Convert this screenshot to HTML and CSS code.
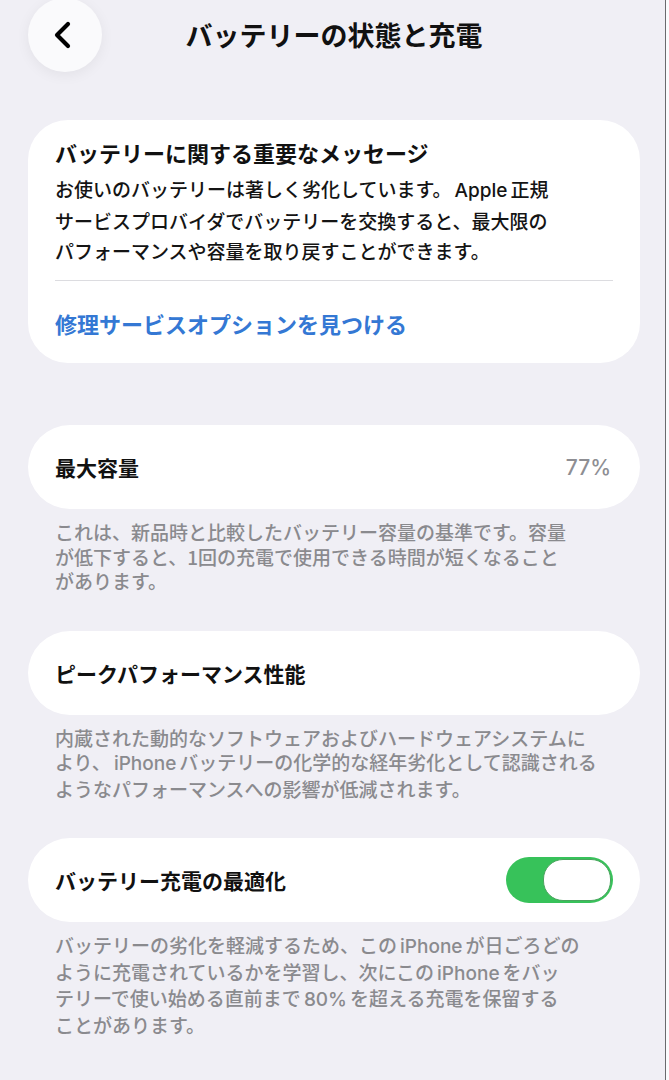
FILE: index.html
```html
<!DOCTYPE html>
<html lang="ja">
<head>
<meta charset="utf-8">
<title>バッテリーの状態と充電</title>
<link rel="stylesheet" href="styles.css">
</head>
<body>
<div class="page">
  <main class="screen">
    <header class="nav">
      <div class="back">
        <svg width="22" height="28" viewBox="0 0 22 28" aria-hidden="true">
          <path d="M16 3 L5 14 L16 25" fill="none" stroke="#000" stroke-width="4.2" stroke-linecap="round" stroke-linejoin="round"/>
        </svg>
      </div>
      <h1 class="title">バッテリーの状態と充電</h1>
      <div></div>
    </header>

    <section class="card message">
      <h2 class="msg-title">バッテリーに関する重要なメッセージ</h2>
      <p class="msg-body">お使いのバッテリーは著しく劣化しています。<span class="lat">Apple</span>正規<br>サービスプロバイダでバッテリーを交換すると、最大限の<br>パフォーマンスや容量を取り戻すことができます。</p>
      <div class="divider"></div>
      <div class="link">修理サービスオプションを見つける</div>
    </section>

    <section class="card row first">
      <span class="label">最大容量</span>
      <span class="value">77%</span>
    </section>
    <p class="desc">これは、新品時と比較したバッテリー容量の基準です。容量<br>が低下すると、1回の充電で使用できる時間が短くなること<br>があります。</p>

    <section class="card row">
      <span class="label">ピークパフォーマンス性能</span>
    </section>
    <p class="desc">内蔵された動的なソフトウェアおよびハードウェアシステムに<br>より、<span class="lat">iPhone</span>バッテリーの化学的な経年劣化として認識される<br>ようなパフォーマンスへの影響が低減されます。</p>

    <section class="card row">
      <span class="label">バッテリー充電の最適化</span>
      <span class="toggle"><span class="knob"></span></span>
    </section>
    <p class="desc">バッテリーの劣化を軽減するため、この<span class="lat">iPhone</span>が日ごろどの<br>ように充電されているかを学習し、次にこの<span class="lat">iPhone</span>をバッ<br>テリーで使い始める直前まで<span class="lat">80%</span>を超える充電を保留する<br>ことがあります。</p>
  </main>
  <div class="edge"></div>
</div>
</body>
</html>
```

FILE: styles.css
```css
html, body {
  margin: 0;
  padding: 0;
}

body {
  background: #f0eff5;
  font-family: Inter, "Noto Sans CJK JP", sans-serif;
  color: #111;
  overflow: hidden;
}

.page {
  display: flex;
  min-height: 1080px;
}

.screen {
  flex: 1;
  padding: 0 25px 0 28px;
}

.edge {
  width: 3px;
  background: #fbfbfd;
  border-left: 1px solid #6a6a6e;
}

.nav {
  display: grid;
  grid-template-columns: 74px 1fr 74px;
  align-items: center;
  height: 74px;
  margin-top: -2px;
}

.back {
  width: 74px;
  height: 74px;
  border-radius: 50%;
  background: #fafafc;
  box-shadow: 0 3px 14px rgba(0, 0, 0, 0.06);
  display: flex;
  align-items: center;
  justify-content: center;
}

.back svg {
  margin-left: -4px;
}

.title {
  margin: 0;
  text-align: center;
  font-family: "Noto Sans CJK JP", sans-serif;
  font-size: 27px;
  font-weight: 700;
  line-height: 36px;
  color: #111;
}

.card {
  background: #fff;
}

.message {
  margin-top: 48px;
  border-radius: 40px;
  padding: 17px 27px 25px;
}

.msg-title {
  margin: 0;
  font-family: "Noto Sans CJK JP", sans-serif;
  font-size: 22px;
  font-weight: 700;
  line-height: 30px;
}

.msg-body {
  margin: 7px 0 0;
  font-family: "Noto Sans CJK JP", sans-serif;
  font-size: 19px;
  font-weight: 500;
  line-height: 30px;
  white-space: nowrap;
  color: #141414;
}

.lat {
  font-family: Inter, "Noto Sans CJK JP", sans-serif;
  margin: 0 3px;
}

.divider {
  margin-top: 14px;
  height: 1px;
  background: #dcdce0;
}

.link {
  margin-top: 27px;
  font-family: "Noto Sans CJK JP", sans-serif;
  font-size: 22px;
  font-weight: 700;
  line-height: 30px;
  color: #3478d4;
}

.row {
  height: 84px;
  border-radius: 42px;
  padding: 0 27px 0 27px;
  display: flex;
  align-items: center;
  justify-content: space-between;
  margin-top: 37px;
}

.row.first {
  margin-top: 62px;
}

.label {
  font-family: "Noto Sans CJK JP", sans-serif;
  font-size: 21px;
  font-weight: 700;
  color: #111;
}

.value {
  font-family: Inter, sans-serif;
  font-size: 21px;
  font-weight: 500;
  color: #8e8e93;
  margin-right: 2px;
}

.toggle {
  width: 107px;
  height: 46px;
  border-radius: 23px;
  background: #37c25a;
  display: flex;
  align-items: center;
  justify-content: flex-end;
  padding: 0 2px;
  box-sizing: border-box;
}

.knob {
  width: 66px;
  height: 40px;
  border-radius: 20px;
  background: #fff;
  border: 1px solid #4aa45e;
}

.desc {
  margin: 11px 0 0;
  padding-left: 27px;
  font-family: "Noto Sans CJK JP", sans-serif;
  font-size: 19px;
  font-weight: 500;
  line-height: 24.5px;
  color: #8a8a8e;
  white-space: nowrap;
}
```
